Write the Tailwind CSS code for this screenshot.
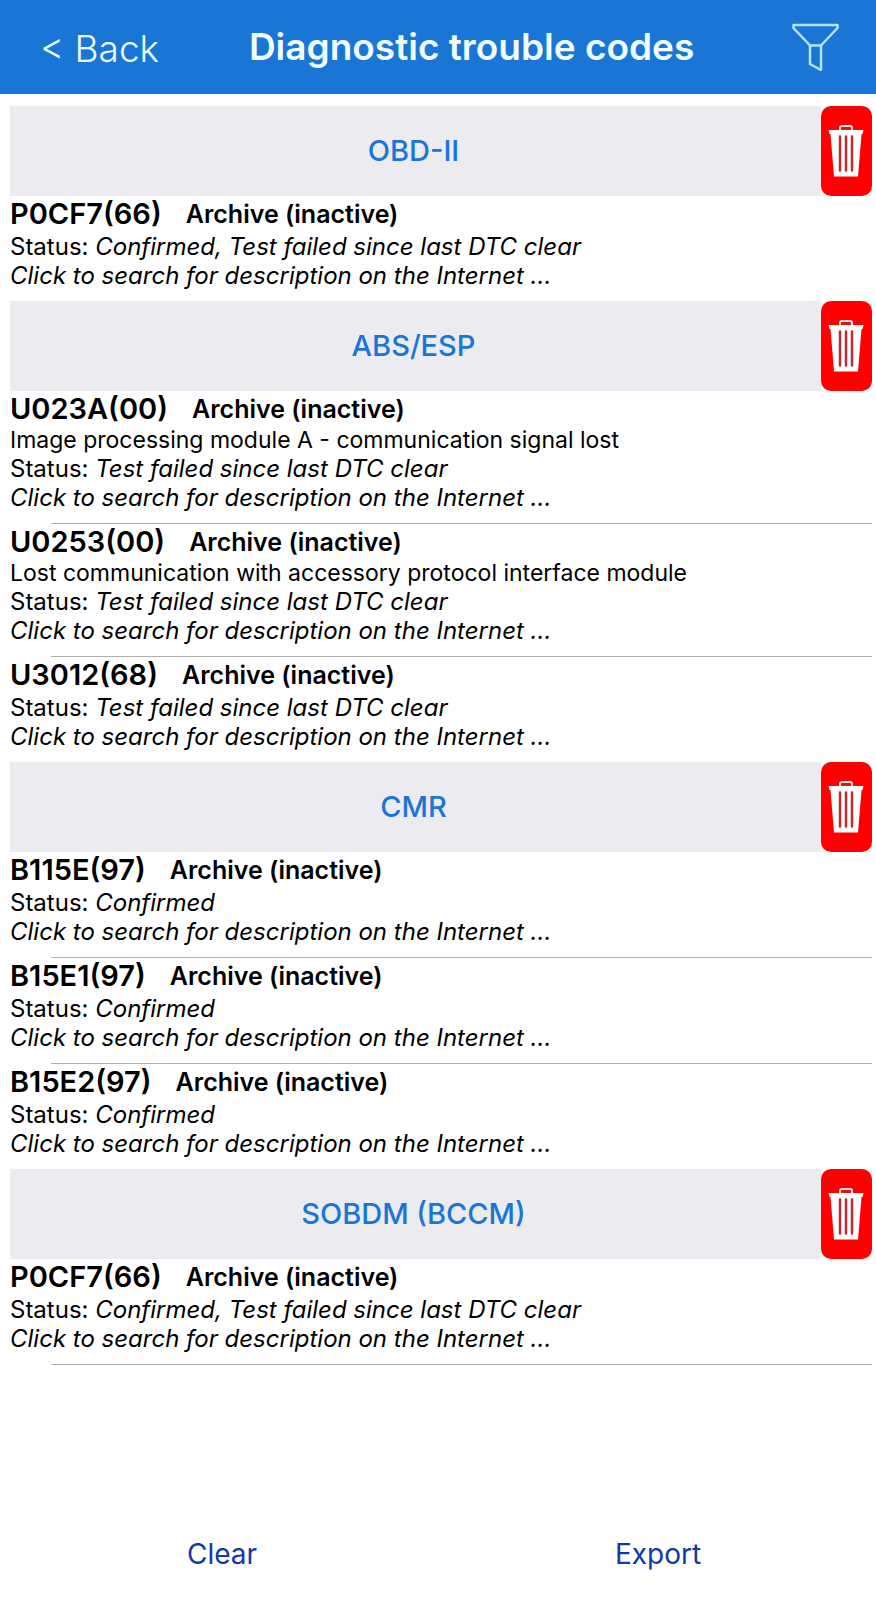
<!DOCTYPE html>
<html lang="en">
  <head>
    <meta charset="UTF-8" />
    <meta name="viewport" content="width=device-width, initial-scale=1.0" />
    <title>Diagnostic trouble codes</title>
    <script src="https://cdn.jsdelivr.net/npm/@tailwindcss/browser@4"></script>
  </head>
  <body class="flex flex-col min-h-screen bg-white text-black font-['Inter',sans-serif]">
    <!-- icon shared by the delete buttons -->
    <svg class="hidden">
      <symbol id="trash" viewBox="0 0 38 54">
        <path d="M13 7V4a2 2 0 0 1 2-2h8a2 2 0 0 1 2 2v3" fill="none" stroke="#ffe4e4" stroke-width="2" />
        <path d="M1.500 6h35l-1 4h-1L31 52.500H7L3.500 10h-1z" fill="#fff" />
        <path d="M14.500 4h9v2h-9z" fill="#c81e1e" />
        <path d="M13 12.500v34M19 12.500v34M25 12.500v34" fill="none" stroke="#c02a30" stroke-width="2.500" stroke-linecap="round" />
      </symbol>
    </svg>

    <header class="flex items-center justify-between h-[94px] pl-10 pr-9 bg-[#1976d5] text-[#effbff]">
      <button type="button" class="pt-1 text-[37px] leading-[44px] font-light">&lt; Back</button>
      <h1 class="pr-2 text-[37px] font-semibold">Diagnostic trouble codes</h1>
      <button type="button" aria-label="Filter">
        <svg class="w-12 h-12" viewBox="0 0 48 48" fill="none" stroke="#b5e2ff" stroke-width="2.500" stroke-linejoin="round">
          <path d="M1.500 2h44v3L29 22.500H18L1.500 5z" />
          <path d="M18 22.500V41l11 6V22.500" />
        </svg>
      </button>
    </header>

    <main class="grow pt-3 pl-[10px] pr-1">
      <section>
        <div class="flex h-[90px]">
          <h2 class="grow flex items-center justify-center pr-1 bg-[#ebebf0] text-[29px] font-medium text-[#1a75d9]">OBD-II</h2>
          <button type="button" aria-label="Delete OBD-II codes" class="flex items-center justify-center w-[51px] pr-0.5 rounded-[10px] bg-[#fe0000]">
            <svg class="w-[38px] h-[54px]"><use href="#trash" /></svg>
          </button>
        </div>
        <article class="pb-[11px] text-[24px] leading-[29px]">
          <h3 class="flex items-center gap-6 text-[29px] leading-[36px] font-semibold">P0CF7(66) <span class="text-[25px]">Archive (inactive)</span></h3>
          <p>Status: <i>Confirmed, Test failed since last DTC clear</i></p>
          <a href="#" class="block italic">Click to search for description on the Internet ...</a>
        </article>
      </section>

      <section>
        <div class="flex h-[90px]">
          <h2 class="grow flex items-center justify-center pr-1 bg-[#ebebf0] text-[29px] font-medium text-[#1a75d9]">ABS/ESP</h2>
          <button type="button" aria-label="Delete ABS/ESP codes" class="flex items-center justify-center w-[51px] pr-0.5 rounded-[10px] bg-[#fe0000]">
            <svg class="w-[38px] h-[54px]"><use href="#trash" /></svg>
          </button>
        </div>
        <article class="pb-[11px] text-[24px] leading-[29px]">
          <h3 class="flex items-center gap-6 text-[29px] leading-[36px] font-semibold">U023A(00) <span class="text-[25px]">Archive (inactive)</span></h3>
          <p class="text-[23px] leading-[27px]">Image processing module A - communication signal lost</p>
          <p>Status: <i>Test failed since last DTC clear</i></p>
          <a href="#" class="block italic">Click to search for description on the Internet ...</a>
        </article>
        <hr class="ml-[41px] border-[#b0b0b0]" />
        <article class="pb-[11px] text-[24px] leading-[29px]">
          <h3 class="flex items-center gap-6 text-[29px] leading-[36px] font-semibold">U0253(00) <span class="text-[25px]">Archive (inactive)</span></h3>
          <p class="text-[23px] leading-[27px]">Lost communication with accessory protocol interface module</p>
          <p>Status: <i>Test failed since last DTC clear</i></p>
          <a href="#" class="block italic">Click to search for description on the Internet ...</a>
        </article>
        <hr class="ml-[41px] border-[#b0b0b0]" />
        <article class="pb-[11px] text-[24px] leading-[29px]">
          <h3 class="flex items-center gap-6 text-[29px] leading-[36px] font-semibold">U3012(68) <span class="text-[25px]">Archive (inactive)</span></h3>
          <p>Status: <i>Test failed since last DTC clear</i></p>
          <a href="#" class="block italic">Click to search for description on the Internet ...</a>
        </article>
      </section>

      <section>
        <div class="flex h-[90px]">
          <h2 class="grow flex items-center justify-center pr-1 bg-[#ebebf0] text-[29px] font-medium text-[#1a75d9]">CMR</h2>
          <button type="button" aria-label="Delete CMR codes" class="flex items-center justify-center w-[51px] pr-0.5 rounded-[10px] bg-[#fe0000]">
            <svg class="w-[38px] h-[54px]"><use href="#trash" /></svg>
          </button>
        </div>
        <article class="pb-[11px] text-[24px] leading-[29px]">
          <h3 class="flex items-center gap-6 text-[29px] leading-[36px] font-semibold">B115E(97) <span class="text-[25px]">Archive (inactive)</span></h3>
          <p>Status: <i>Confirmed</i></p>
          <a href="#" class="block italic">Click to search for description on the Internet ...</a>
        </article>
        <hr class="ml-[41px] border-[#b0b0b0]" />
        <article class="pb-[11px] text-[24px] leading-[29px]">
          <h3 class="flex items-center gap-6 text-[29px] leading-[36px] font-semibold">B15E1(97) <span class="text-[25px]">Archive (inactive)</span></h3>
          <p>Status: <i>Confirmed</i></p>
          <a href="#" class="block italic">Click to search for description on the Internet ...</a>
        </article>
        <hr class="ml-[41px] border-[#b0b0b0]" />
        <article class="pb-[11px] text-[24px] leading-[29px]">
          <h3 class="flex items-center gap-6 text-[29px] leading-[36px] font-semibold">B15E2(97) <span class="text-[25px]">Archive (inactive)</span></h3>
          <p>Status: <i>Confirmed</i></p>
          <a href="#" class="block italic">Click to search for description on the Internet ...</a>
        </article>
      </section>

      <section>
        <div class="flex h-[90px]">
          <h2 class="grow flex items-center justify-center pr-1 bg-[#ebebf0] text-[29px] font-medium text-[#1a75d9]">SOBDM (BCCM)</h2>
          <button type="button" aria-label="Delete SOBDM codes" class="flex items-center justify-center w-[51px] pr-0.5 rounded-[10px] bg-[#fe0000]">
            <svg class="w-[38px] h-[54px]"><use href="#trash" /></svg>
          </button>
        </div>
        <article class="pb-[11px] text-[24px] leading-[29px]">
          <h3 class="flex items-center gap-6 text-[29px] leading-[36px] font-semibold">P0CF7(66) <span class="text-[25px]">Archive (inactive)</span></h3>
          <p>Status: <i>Confirmed, Test failed since last DTC clear</i></p>
          <a href="#" class="block italic">Click to search for description on the Internet ...</a>
        </article>
        <hr class="ml-[41px] border-[#b0b0b0]" />
      </section>
    </main>

    <footer class="grid grid-cols-2 pl-1 pb-[25px] text-[28px] text-[#1238a8]">
      <button type="button">Clear</button>
      <button type="button">Export</button>
    </footer>
  </body>
</html>
